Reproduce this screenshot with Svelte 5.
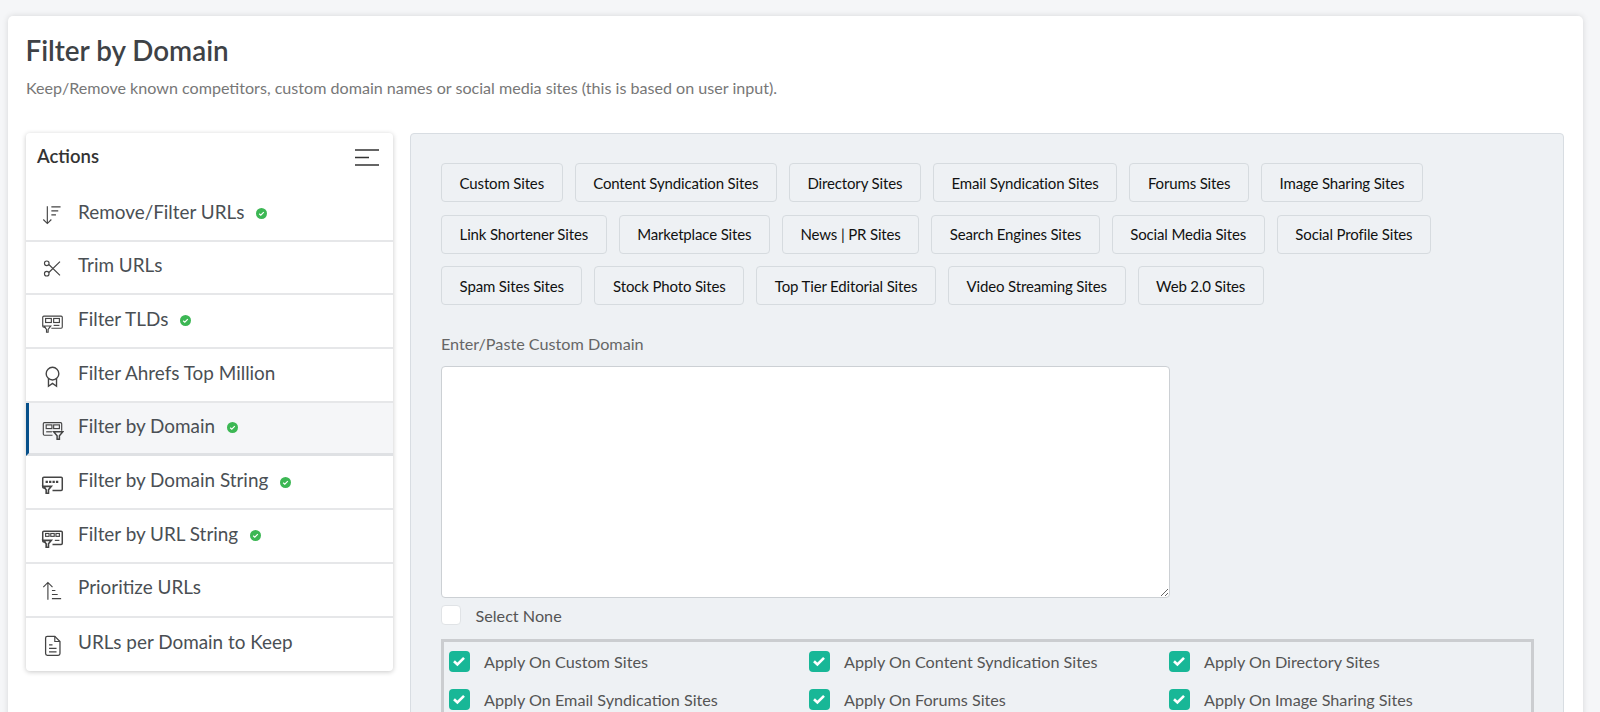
<script>
  const actions = [
    { label: 'Remove/Filter URLs', icon: 'remove', ok: true },
    { label: 'Trim URLs', icon: 'trim' },
    { label: 'Filter TLDs', icon: 'tld', ok: true },
    { label: 'Filter Ahrefs Top Million', icon: 'award' },
    { label: 'Filter by Domain', icon: 'domain', ok: true, active: true },
    { label: 'Filter by Domain String', icon: 'dstring', ok: true },
    { label: 'Filter by URL String', icon: 'ustring', ok: true },
    { label: 'Prioritize URLs', icon: 'prio' },
    { label: 'URLs per Domain to Keep', icon: 'doc' }
  ];
  const sites = [
    'Custom Sites', 'Content Syndication Sites', 'Directory Sites', 'Email Syndication Sites', 'Forums Sites', 'Image Sharing Sites',
    'Link Shortener Sites', 'Marketplace Sites', 'News | PR Sites', 'Search Engines Sites', 'Social Media Sites', 'Social Profile Sites',
    'Spam Sites Sites', 'Stock Photo Sites', 'Top Tier Editorial Sites', 'Video Streaming Sites', 'Web 2.0 Sites'
  ];
  const applies = sites.slice(0, 6);
</script>

<div class="page">
  <main class="card">
    <h1>Filter by Domain</h1>
    <p class="desc">Keep/Remove known competitors, custom domain names or social media sites (this is based on user input).</p>
    <div class="cols">
      <aside class="side">
        <div class="side-head">
          <span>Actions</span>
          <svg width="24" height="17" viewBox="0 0 24 17" fill="none" stroke="#333" stroke-width="1.4"><path d="M0 1h24M0 8.500h14M0 16h24"/></svg>
        </div>
        {#each actions as a}
          <div class="row" class:active={a.active}>
            <svg class="ico" width="23" height="23" viewBox="0 0 20 20" fill="none" stroke="#444" stroke-width="1">
              {#if a.icon === 'remove'}
                <path d="M5.500 2v15M2 13.500l3.500 3.500 3.500-3.500M9 2.500h8M9 6h6M9 9.500h4"/>
              {:else if a.icon === 'trim'}
                <circle cx="5" cy="5.500" r="2"/><circle cx="5" cy="14.500" r="2"/><path d="M6.800 6.500L16.500 16M6.800 13.500L16.500 4"/>
              {:else if a.icon === 'tld'}
                <path d="M4 14H2.500q-1-.1-1-1V5.500q0-1 1-1h15q1 0 1 1V14q0 1-1 1H9"/><rect x="4" y="6.500" width="5" height="3.500"/><rect x="11" y="6.500" width="5" height="3.500"/><path d="M11 12.500h5"/><path d="M2.500 13h6l-2.300 3v2.500h-1.400V16z"/>
              {:else if a.icon === 'award'}
                <circle cx="10" cy="7.500" r="5.500" stroke-width="1.200"/><path d="M6.500 12v6.500l3.500-2.500 3.500 2.500V12" stroke-width="1.200"/>
              {:else if a.icon === 'domain'}
                <path d="M10 15H3q-1 0-1-1V5q0-1 1-1h14q1 0 1 1v6"/><rect x="4.500" y="6" width="5" height="3.200"/><rect x="11" y="6" width="5" height="3.200"/><path d="M4.500 12h5"/><path d="M11 12h8l-3 3.500v3h-2v-3z" stroke-width="1.300"/>
              {:else if a.icon === 'dstring'}
                <path d="M4 14H2.500q-1-.1-1-1V5.500q0-1 1-1h15q1 0 1 1V15q0 1-1 1H10" stroke-width="1.300"/><path d="M4 8.500h12" stroke-width="2" stroke-dasharray="2 1"/><path d="M2 12.500h7L6.500 15.500v3h-2v-3z" stroke-width="1.400"/>
              {:else if a.icon === 'ustring'}
                <path d="M4 14H2.500q-1-.1-1-1V5.500q0-1 1-1h15q1 0 1 1V15q0 1-1 1H10" stroke-width="1.300"/><rect x="4" y="6.500" width="3" height="2.500"/><rect x="8.500" y="6.500" width="3" height="2.500"/><rect x="13" y="6.500" width="3" height="2.500"/><path d="M12 12.500h4"/><path d="M2 12.500h7L6.500 15.500v3h-2v-3z" stroke-width="1.400"/>
              {:else if a.icon === 'prio'}
                <path d="M6 18V3M2 7l4-4 4 4M9.500 10h3M9.500 13.500h5M9.500 17h8"/>
              {:else}
                <path d="M4 3.500q0-1.500 1.500-1.500h6.500l4.500 4.500V17q0 1.500-1.500 1.500H5.500Q4 18.500 4 17z" stroke-width="1.100"/><path d="M12 2v4.500h4.500M7 9.500h3M7 12.500h6.500M7 15.500h6.500"/>
              {/if}
            </svg>
            <span class="lbl">{a.label}</span>
            {#if a.ok}
              <svg class="ok" width="11" height="11" viewBox="0 0 11 11"><circle cx="5.500" cy="5.500" r="5.500" fill="#3cb754"/><path d="M3.200 5.700l1.600 1.500 3-3" fill="none" stroke="#fff" stroke-width="1.200"/></svg>
            {/if}
          </div>
        {/each}
      </aside>
      <section class="panel">
        <div class="chips">
          {#each sites as s}
            <button type="button">{s}</button>
          {/each}
        </div>
        <label class="field-label" for="dom">Enter/Paste Custom Domain</label>
        <textarea id="dom"></textarea>
        <div class="none"><span class="box"></span><span>Select None</span></div>
        <div class="apply">
          {#each applies as s}
            <div class="item">
              <span class="tick">
                <svg width="14" height="12" viewBox="0 0 14 12"><path d="M2 6.200l3.400 3.300L12 2.800" fill="none" stroke="#fff" stroke-width="2.600"/></svg>
              </span>
              <span>Apply On {s}</span>
            </div>
          {/each}
        </div>
      </section>
    </div>
  </main>
</div>

<style>
  :global(body) { margin: 0; background: #f5f6f8; }
  .page {
    height: 712px;
    overflow: hidden;
    padding: 16px 17px 0 8px;
    box-sizing: border-box;
    font-family: Lato, "Liberation Sans", sans-serif;
  }
  .card {
    background: #fff;
    border-radius: 5px;
    box-shadow: 0 0 6px rgba(0, 0, 0, .13);
    padding: 19px 19px 40px 18px;
    height: 900px;
    box-sizing: border-box;
  }
  h1 {
    margin: 0 0 0 -0.500px;
    font-size: 27.800px;
    line-height: 32px;
    font-weight: 600;
    color: #3e4246;
  }
  .desc {
    margin: 11px 0 0;
    font-size: 16.100px;
    line-height: 20px;
    color: #777;
  }
  .cols {
    display: flex;
    align-items: flex-start;
    gap: 17.200px;
    margin-top: 35px;
  }
  .side {
    width: 367px;
    flex: none;
    background: #fff;
    border-radius: 4px;
    box-shadow: 0 1px 5px rgba(0, 0, 0, .22);
  }
  .side-head {
    height: 55px;
    box-sizing: border-box;
    padding: 13px 14px 0 11px;
    display: flex;
    justify-content: space-between;
    align-items: flex-start;
    font-size: 18.500px;
    line-height: 20px;
    font-weight: 600;
    color: #333;
  }
  .side-head svg { margin-top: 3px; }
  .row {
    height: 53.700px;
    box-sizing: border-box;
    display: flex;
    align-items: center;
    padding: 0 0 4.500px 16px;
    border-bottom: 2px solid #e6e7e9;
    font-size: 18.900px;
    color: #4a4f54;
  }
  .row:last-child { border-bottom: 0; }
  .row.active {
    background: #f5f6f8;
    border-left: 3px solid #07508a;
    padding-left: 13px;
    border-bottom-width: 3px;
    border-bottom-color: #dfe1e4;
  }
  .ico { flex: none; margin: 7px 14.500px 0 -1.500px; }
  .lbl { line-height: 22px; }
  .ok { margin: 4px 0 0 11.500px; }
  .panel {
    flex: 1;
    min-width: 0;
    height: 700px;
    background: #eef1f4;
    border: 1px solid #d8dde2;
    border-radius: 4px;
    padding: 29px 30px 0 29.800px;
    box-sizing: border-box;
  }
  .chips {
    display: flex;
    flex-wrap: wrap;
    gap: 12px;
    row-gap: 12.500px;
    max-width: 1010px;
  }
  button {
    height: 39px;
    padding: 0 17.600px;
    background: #eef1f4;
    border: 1px solid #d6dbdf;
    border-radius: 4px;
    font: 15px Lato, sans-serif;
    letter-spacing: -0.150px;
    color: #111;
  }
  .field-label {
    display: block;
    margin-top: 29px;
    font-size: 16.200px;
    line-height: 20px;
    color: #666;
  }
  textarea {
    display: block;
    width: 729px;
    height: 232px;
    margin-top: 12px;
    box-sizing: border-box;
    background: #fff;
    border: 1px solid #ccd0d4;
    border-radius: 4px;
  }
  .none {
    display: flex;
    align-items: center;
    gap: 14.500px;
    margin-top: 7px;
    height: 20px;
    font-size: 16.200px;
    color: #555;
  }
  .box {
    width: 20px;
    height: 20px;
    box-sizing: border-box;
    background: #fff;
    border: 1px solid #e0e3e6;
    border-radius: 4px;
  }
  .apply {
    display: grid;
    grid-template-columns: repeat(3, 360px);
    grid-auto-rows: 20px;
    row-gap: 18px;
    width: 1093px;
    height: 200px;
    margin-top: 14px;
    padding: 9px 5px;
    box-sizing: border-box;
    border: 3px solid #cbcdd0;
  }
  .item {
    display: flex;
    align-items: center;
    gap: 14px;
    height: 20px;
    font-size: 16.200px;
    color: #555;
  }
  .tick {
    width: 21px;
    height: 21px;
    flex: none;
    display: flex;
    align-items: center;
    justify-content: center;
    background: #18b797;
    border-radius: 4px;
  }
</style>
